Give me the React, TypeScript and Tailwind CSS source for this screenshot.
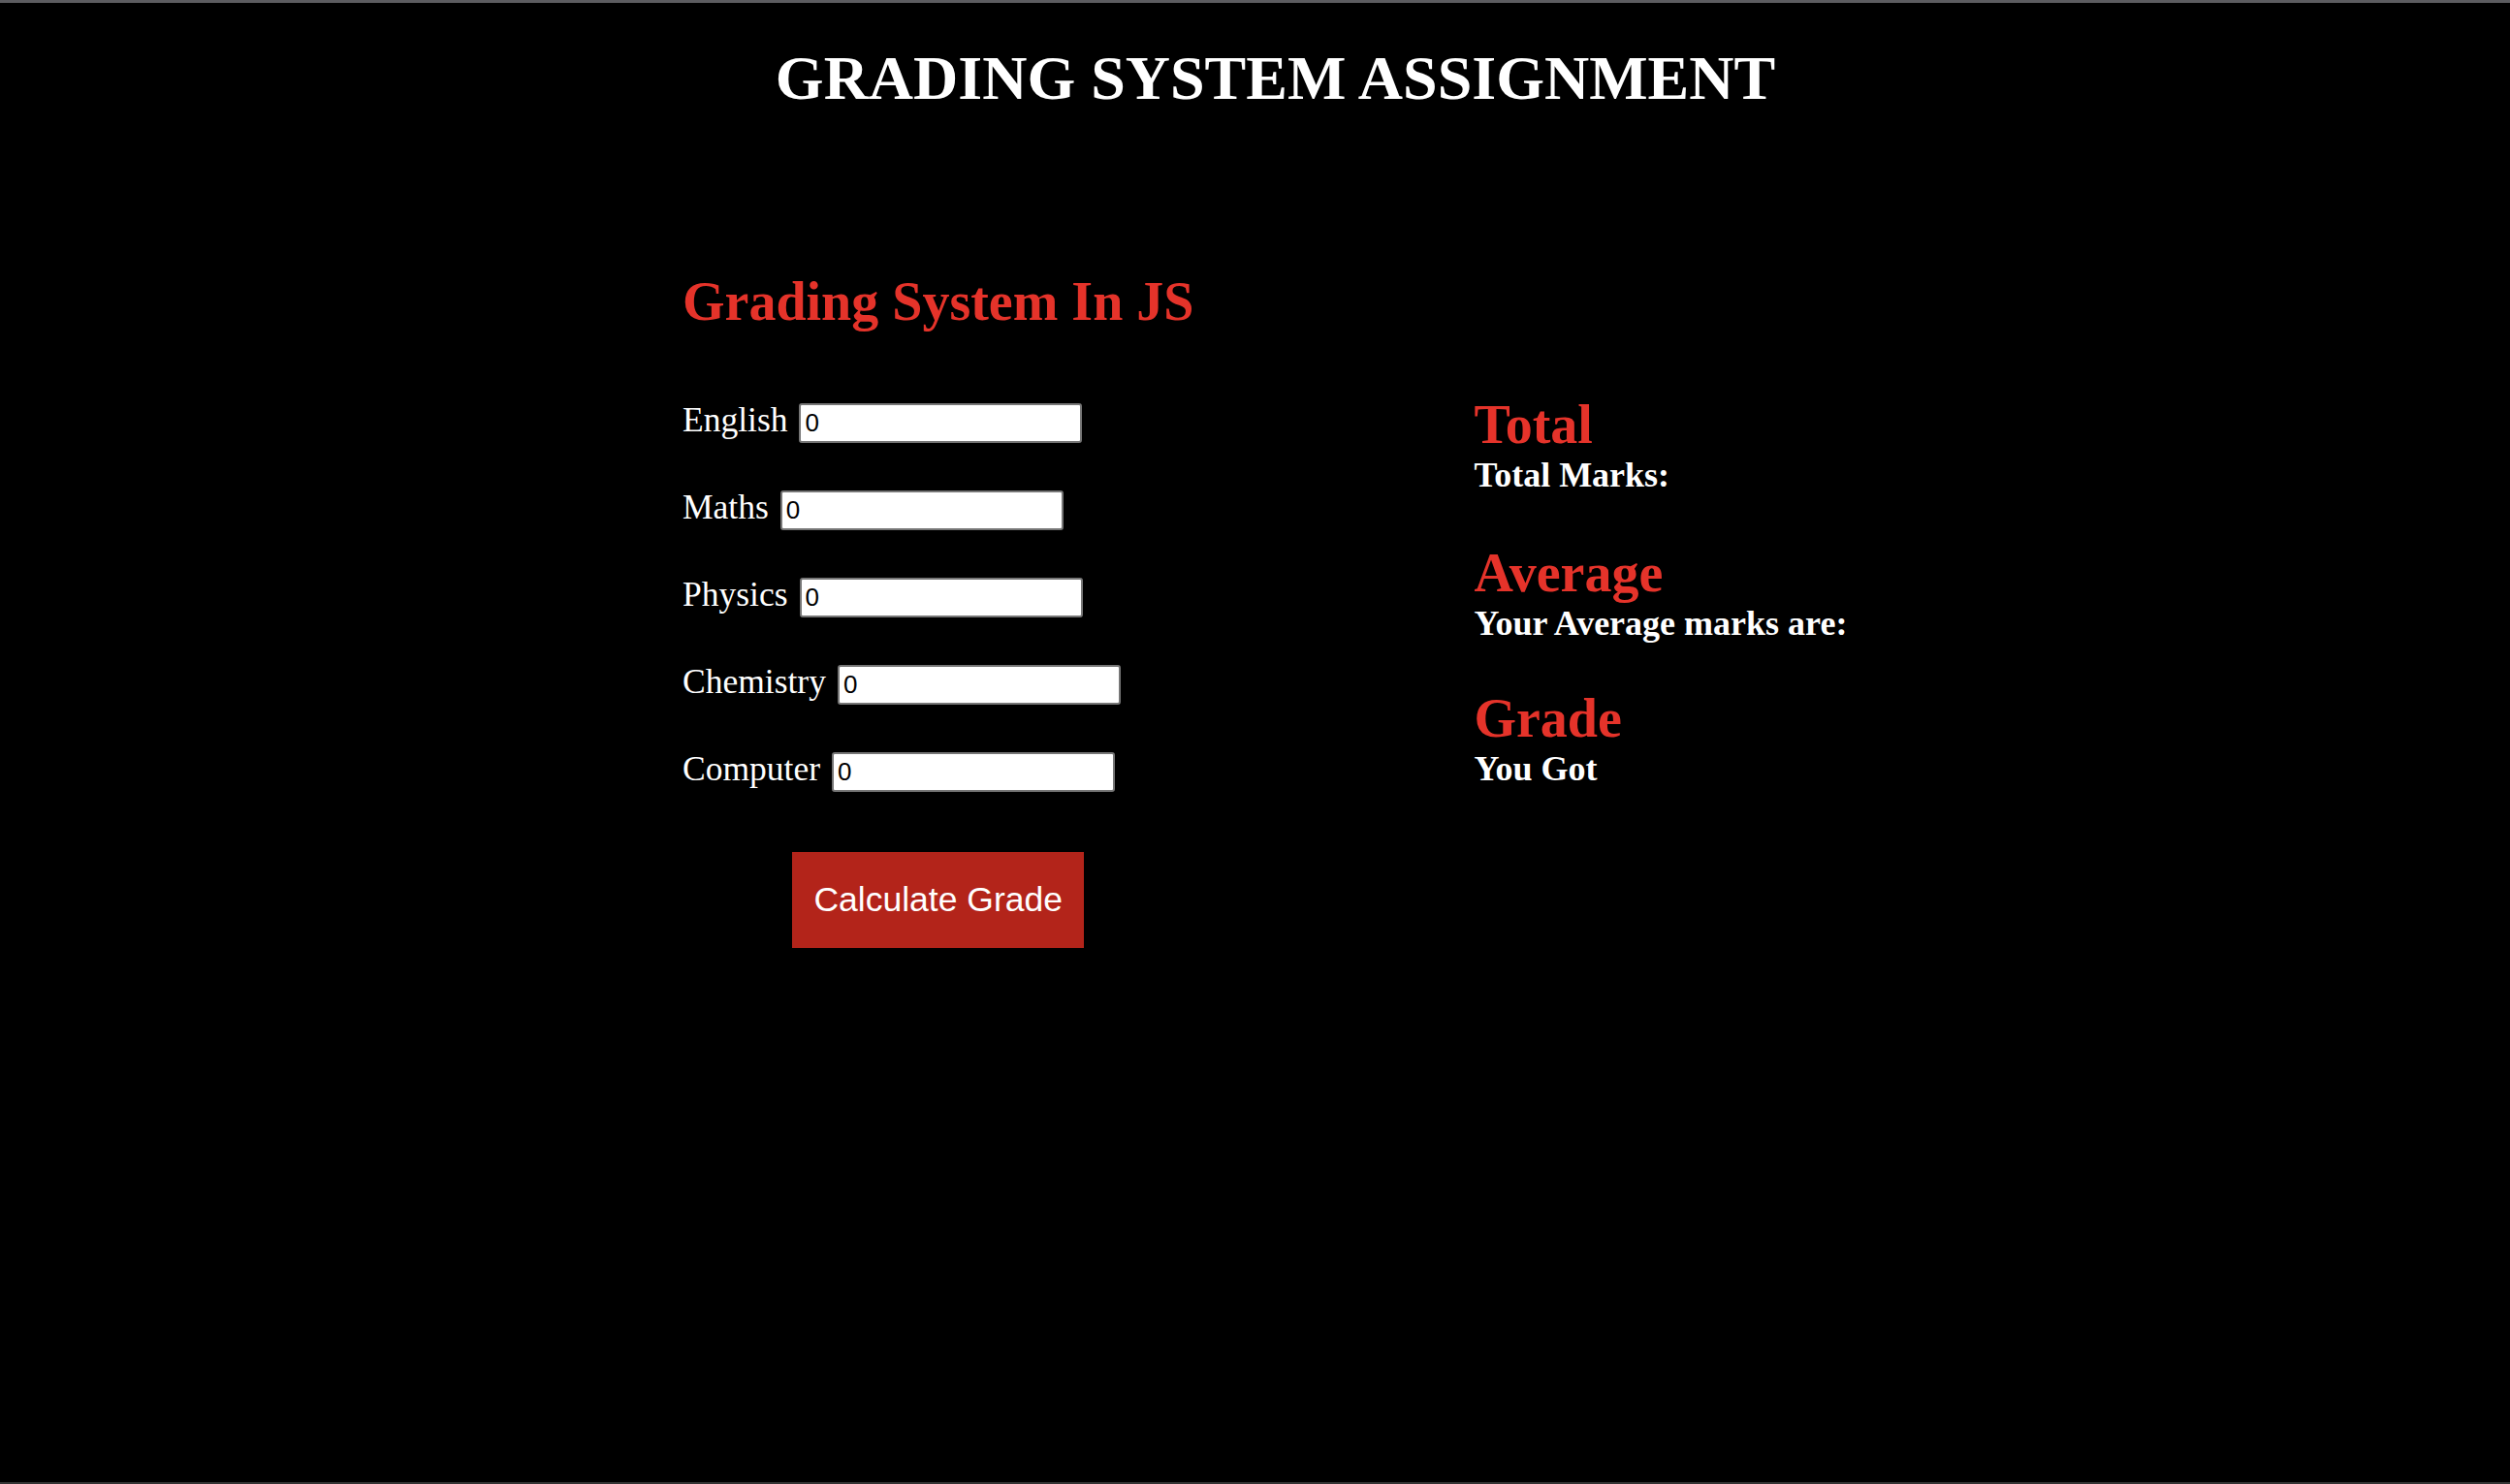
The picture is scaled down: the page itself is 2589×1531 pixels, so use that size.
import { useState } from "react";

const subjects = ["English", "Maths", "Physics", "Chemistry", "Computer"];

export default function App() {
  const [marks, setMarks] = useState<Record<string, string>>(
    Object.fromEntries(subjects.map((s) => [s, "0"]))
  );

  return (
    <div className="flex h-screen flex-col overflow-hidden border-t-[3px] border-b-2 border-t-[#5c5c60] border-b-[#333333] bg-black font-['Liberation_Serif',serif] text-white">
      <h1 className="pt-[46px] pl-[42px] text-center text-[64px] font-bold leading-none">
        GRADING SYSTEM ASSIGNMENT
      </h1>

      <main className="mt-[170px] flex items-start gap-[289px] pl-[704px]">
        <section className="flex w-fit flex-col">
          <h2 className="text-[56px] font-bold leading-none text-[#e5332a]">Grading System In JS</h2>

          <div className="mt-[77px] flex flex-col gap-[49px]">
            {subjects.map((s) => (
              <label key={s} className="flex items-baseline gap-[12px] text-[35.5px] leading-none">
                <span>{s}</span>
                <input
                  type="text"
                  value={marks[s]}
                  onChange={(e) => setMarks({ ...marks, [s]: e.target.value })}
                  className="h-[41px] w-[292px] rounded-[3px] border-2 border-[#767676] bg-white pl-[4px] font-['Liberation_Sans',Arial,sans-serif] text-[26px] text-black outline-none"
                />
              </label>
            ))}
          </div>

          <button
            type="button"
            className="mt-[62px] h-[99px] w-[301px] self-center bg-[#b3241a] font-['Liberation_Sans',Arial,sans-serif] text-[35.5px] leading-none text-white"
          >
            Calculate Grade
          </button>
        </section>

        <section className="mt-[127px] flex flex-col">
          <h2 className="text-[56px] font-bold leading-none text-[#e5332a]">Total</h2>
          <p className="mt-[6px] text-[36px] font-bold leading-none">Total Marks:</p>

          <h2 className="mt-[55px] text-[56px] font-bold leading-none text-[#e5332a]">Average</h2>
          <p className="mt-[6px] text-[36px] font-bold leading-none">Your Average marks are:</p>

          <h2 className="mt-[52px] text-[56px] font-bold leading-none text-[#e5332a]">Grade</h2>
          <p className="mt-[6px] text-[36px] font-bold leading-none">You Got</p>
        </section>
      </main>
    </div>
  );
}
